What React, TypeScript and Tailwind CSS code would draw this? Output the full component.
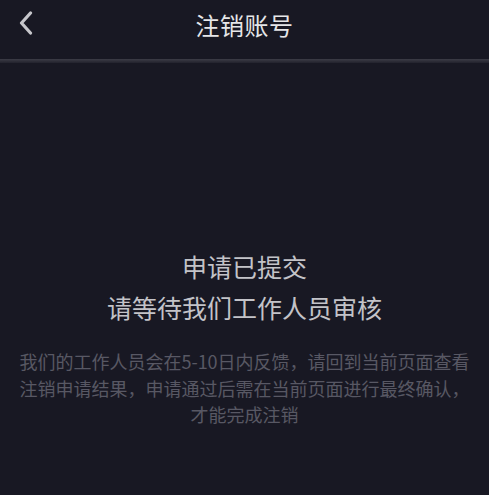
export default function App() {
  return (
    <div className="min-h-screen w-full bg-[#181823] font-['Noto_Sans_CJK_SC','Noto_Sans',sans-serif]">
      <header className="relative flex h-[59px] items-center justify-center pb-[10px]">
        <button className="absolute left-[14px] top-[8px] flex h-[30px] w-[24px] items-center justify-center">
          <svg width="14" height="24" viewBox="0 0 14 24" fill="none">
            <path
              d="M11.5 2 L2.5 12 L11.5 22"
              stroke="#c6c6cb"
              strokeWidth="3.2"
              strokeLinecap="round"
              strokeLinejoin="round"
            />
          </svg>
        </button>
        <h1 className="text-[24px] leading-none tracking-[0.5px] text-[#e6e6e8]">注销账号</h1>
      </header>
      <div className="h-[4px] bg-gradient-to-b from-[#3c3c46] to-[#22222d]" />

      <main className="flex flex-col items-center px-4 pt-[183px] text-center">
        <div className="text-[25px] leading-[41px] text-[#c3c3c8]">
          <p>申请已提交</p>
          <p>请等待我们工作人员审核</p>
        </div>
        <p className="mt-[20px] text-[18px] leading-[26.5px] text-[#585864]">
          我们的工作人员会在5-10日内反馈，请回到当前页面查看注销申请结果，申请通过后需在当前页面进行最终确认，才能完成注销
        </p>
      </main>
    </div>
  );
}
